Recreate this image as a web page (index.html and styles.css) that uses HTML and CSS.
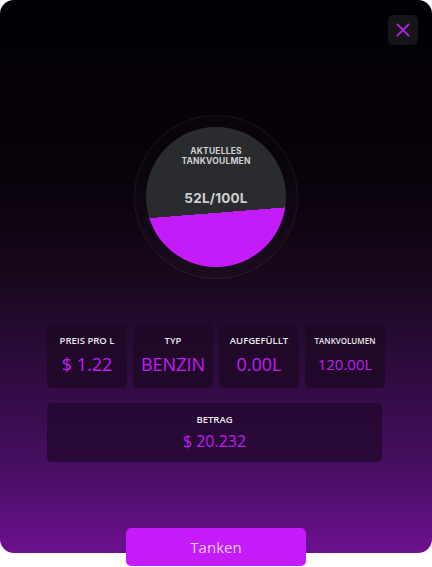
FILE: index.html
```html
<!DOCTYPE html>
<html lang="de">
<head>
    <meta charset="UTF-8">
    <meta name="viewport" content="width=device-width, initial-scale=1.0">
    <title>Tankstelle</title>
    <link rel="stylesheet" href="styles.css">
</head>
<body>

    <div class="screen">
        <div class="panel">
            <div class="top-bar">
                <button class="close-btn" aria-label="Schließen">
                    <svg width="14" height="14" viewBox="0 0 14 14">
                        <path d="M1.5 1.5 L12.5 12.5 M12.5 1.5 L1.5 12.5" stroke="#b41fe6" stroke-width="1.8" stroke-linecap="square"/>
                    </svg>
                </button>
            </div>

            <!-- Tank gauge -->
            <div class="gauge">
                <div class="gauge-inner">
                    <div class="gauge-title">AKTUELLES<br>TANKVOULMEN</div>
                    <div class="gauge-value">52L/100L</div>
                </div>
            </div>

            <!-- Info cards -->
            <div class="cards">
                <div class="card">
                    <span class="card-label">PREIS PRO L</span>
                    <span class="card-value">$ 1.22</span>
                </div>
                <div class="card">
                    <span class="card-label">TYP</span>
                    <span class="card-value">BENZIN</span>
                </div>
                <div class="card">
                    <span class="card-label">AUFGEFÜLLT</span>
                    <span class="card-value">0.00L</span>
                </div>
                <div class="card small">
                    <span class="card-label">TANKVOLUMEN</span>
                    <span class="card-value">120.00L</span>
                </div>
            </div>

            <div class="amount">
                <span class="card-label">BETRAG</span>
                <span class="amount-value">$ 20.232</span>
            </div>
        </div>

        <button class="fill-btn">Tanken</button>
    </div>

</body>
</html>
```

FILE: styles.css
```css
body {
    margin: 0;
    background: #ffffff;
    font-family: "Open Sans", "Lato", sans-serif;
}

.screen {
    width: 432px;
    height: 567px;
    display: flex;
    flex-direction: column;
    align-items: center;
}

.screen > * {
    flex-shrink: 0;
}

.panel {
    width: 432px;
    height: 553px;
    box-sizing: border-box;
    border-radius: 14px;
    background: linear-gradient(to bottom, #020004 0%, #070209 30%, #160719 48%, #2b0b3b 65%, #480e63 85%, #6c1190 100%);
    display: flex;
    flex-direction: column;
    align-items: center;
    padding-top: 15px;
}

.panel > * {
    flex-shrink: 0;
}

.top-bar {
    width: 100%;
    display: flex;
    justify-content: flex-end;
    padding-right: 14px;
    box-sizing: border-box;
}

.close-btn {
    width: 30px;
    height: 30px;
    border: none;
    border-radius: 5px;
    background: #161517;
    display: flex;
    align-items: center;
    justify-content: center;
    padding: 0;
    cursor: pointer;
}

.gauge {
    margin-top: 70px;
    width: 164px;
    height: 164px;
    box-sizing: border-box;
    border-radius: 50%;
    border: 1px solid rgba(255, 255, 255, 0.06);
    background: rgba(255, 255, 255, 0.015);
    display: flex;
    align-items: center;
    justify-content: center;
}

.gauge-inner {
    width: 140px;
    height: 140px;
    border-radius: 50%;
    background: linear-gradient(175.5deg, #2a2b2f 60.5%, #c41bfa 60.5%);
    display: flex;
    flex-direction: column;
    align-items: center;
    font-family: "Inter", sans-serif;
    font-weight: 700;
    color: #cfcfd2;
}

.gauge-title {
    margin-top: 19px;
    font-size: 8.5px;
    line-height: 10px;
    text-align: center;
    letter-spacing: 0.2px;
}

.gauge-value {
    margin-top: 24px;
    font-size: 13.5px;
    letter-spacing: 0.2px;
}

.cards {
    margin-top: 45px;
    display: flex;
    gap: 6px;
}

.card {
    width: 80px;
    height: 64px;
    border-radius: 5px;
    background: rgba(30, 8, 38, 0.85);
    display: flex;
    flex-direction: column;
    align-items: center;
    padding-top: 11px;
    box-sizing: border-box;
}

.card-label {
    font-size: 9.5px;
    font-weight: 600;
    color: #ece8ee;
    line-height: 12px;
}

.card-value {
    margin-top: 5px;
    font-size: 18px;
    color: #c31cf5;
    line-height: 24px;
}

.card.small .card-label {
    font-size: 8px;
}

.card.small .card-value {
    font-size: 15px;
}

.amount {
    margin-top: 15px;
    margin-right: 3px;
    width: 335px;
    height: 59px;
    border-radius: 5px;
    background: rgba(36, 8, 48, 0.85);
    display: flex;
    flex-direction: column;
    align-items: center;
    padding-top: 11px;
    box-sizing: border-box;
}

.amount-value {
    margin-top: 4px;
    font-size: 16px;
    color: #c31cf5;
    line-height: 22px;
}

.fill-btn {
    margin-top: -25px;
    width: 180px;
    height: 38px;
    border: none;
    border-radius: 5px;
    background: #c51bfc;
    color: #e6cdee;
    font-family: "Open Sans", sans-serif;
    font-size: 15px;
    cursor: pointer;
}
```
